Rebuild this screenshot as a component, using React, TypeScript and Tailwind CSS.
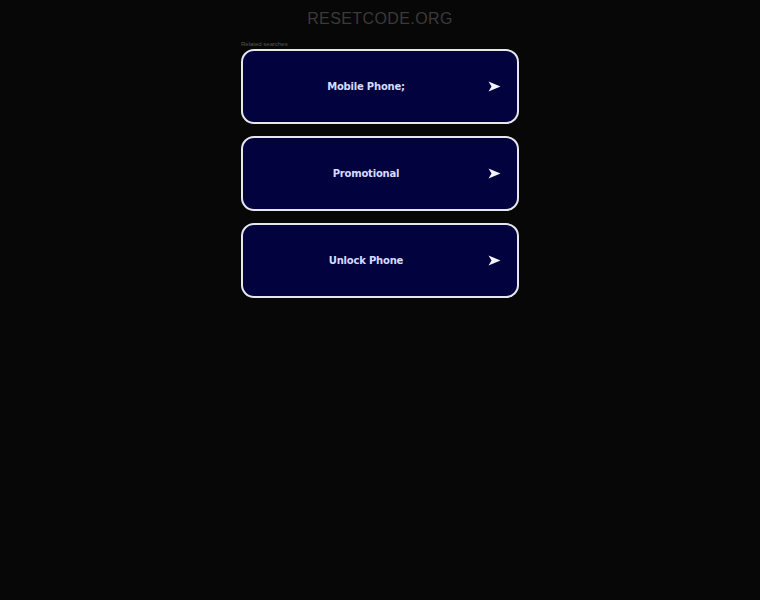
const items = ['Mobile Phone;', 'Promotional', 'Unlock Phone'];

function Arrow() {
	return (
		<svg width="13" height="11" viewBox="0 0 13 11" className="shrink-0">
			<path d="M0.5 0.5 L12.5 5.5 L0.5 10.5 L3.5 5.5 Z" fill="#f4f4ff" />
		</svg>
	);
}

export default function App() {
	return (
		<div className="min-h-[600px] w-full bg-[#070707] font-['DejaVu_Sans',sans-serif]">
			<div className="flex flex-col items-center pt-[10px]">
				<h1 className="font-['Liberation_Sans',sans-serif] text-[16px] leading-[18px] tracking-[0.4px] text-[#3a3a3a]">
					RESETCODE.ORG
				</h1>
			</div>
			<div className="mx-auto mt-[12px] w-[278px]">
				<p className="font-['Liberation_Sans',sans-serif] text-[6px] leading-[8px] text-[#555]">
					Related searches
				</p>
				<div className="mt-[1px] flex flex-col gap-[12px]">
					{items.map((label) => (
						<a
							key={label}
							href="#"
							className="flex h-[75px] items-center rounded-[13px] border-2 border-[#e6e6ee] bg-[#02023f] pl-[20px] pr-[16px]"
						>
							<span className="mr-[19px] flex-1 text-center text-[10px] font-bold tracking-[-0.2px] text-[#d6dcff]">
								{label}
							</span>
							<Arrow />
						</a>
					))}
				</div>
			</div>
		</div>
	);
}
